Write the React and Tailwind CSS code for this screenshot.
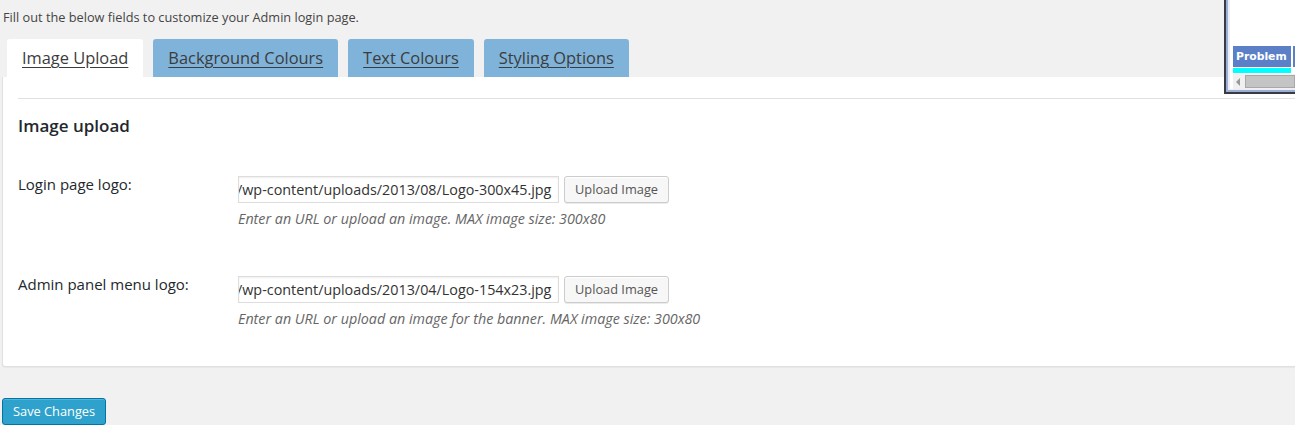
import React from 'react';

const tabs = [
  { label: 'Image Upload', active: true },
  { label: 'Background Colours' },
  { label: 'Text Colours' },
  { label: 'Styling Options' },
];

const fields = [
  {
    label: 'Login page logo:',
    value: '/wp-content/uploads/2013/08/Logo-300x45.jpg',
    help: 'Enter an URL or upload an image. MAX image size: 300x80',
  },
  {
    label: 'Admin panel menu logo:',
    value: '/wp-content/uploads/2013/04/Logo-154x23.jpg',
    help: 'Enter an URL or upload an image for the banner. MAX image size: 300x80',
  },
];

const UploadRow = ({ label, value, help }) => (
  <div className="flex pl-[15px]">
    <div className="w-[220px] pt-[1px] text-[15px] leading-[14px] text-[#23282d]">{label}</div>
    <div>
      <div className="flex items-center gap-[5px]">
        <div className="h-[27px] w-[321px] overflow-hidden whitespace-nowrap border border-[#ddd] bg-white text-[14.35px] leading-[25px] text-[#333] shadow-[inset_0_1px_2px_rgba(0,0,0,0.07)]">
          <span className="-ml-[2px] inline-block">{value}</span>
        </div>
        <button className="h-[27px] rounded-[3px] border border-[#ccc] bg-[#f7f7f7] px-[10px] text-[12.8px] text-[#555] shadow-[0_1px_0_#fff_inset,0_1px_0_rgba(0,0,0,0.08)]">
          Upload Image
        </button>
      </div>
      <p className="mt-[6px] whitespace-nowrap text-[14.3px] italic leading-[20px] text-[#666]">{help}</p>
    </div>
  </div>
);

// the stray window peeking in at the top right corner
const ProblemWindow = () => (
  <div className="absolute right-0 top-0 h-[94px] w-[71px] border-b-2 border-l-2 border-[#3a3a44]">
    <div className="h-full border-b-2 border-l-2 border-[#9aaed8] bg-[#eceef4] pl-[2px] pb-[1px]">
      <div className="flex h-full flex-col bg-white pl-[3px]">
        <div className="flex-1" />
        <div className="flex h-[21px]">
          <div className="w-[58px] overflow-hidden whitespace-nowrap bg-[#5b80c8] pl-[3px] font-['DejaVu_Sans',sans-serif] text-[10.8px] font-bold leading-[21px] text-white">
            Problem
          </div>
          <div className="ml-[2px] flex-1 bg-[#5b80c8]" />
        </div>
        <div className="mt-[1px] h-[5px] w-[58px] bg-[#00ffff]" />
        <div className="mt-[1px] flex h-[15px] items-center bg-[#f0f0f0]">
          <span className="ml-[3px] h-0 w-0 border-y-[4px] border-r-[4px] border-y-transparent border-r-[#999]" />
          <div className="ml-[5px] h-[13px] flex-1 border border-[#a8a8a8] bg-[#c4c4c4]" />
        </div>
      </div>
    </div>
  </div>
);

export default function App() {
  return (
    <div className="relative h-[425px] w-[1295px] overflow-hidden bg-[#f1f1f1] font-['Open_Sans',sans-serif] text-[#444]">
      <ProblemWindow />

      <p className="pl-[3px] pt-[8px] text-[12.75px] leading-[18px]">
        Fill out the below fields to customize your Admin login page.
      </p>

      <div className="mt-[13px] flex gap-[10px] pl-[7px]">
        {tabs.map((t) => (
          <div
            key={t.label}
            className={`h-[38px] rounded-t-[3px] px-[15px] pt-[6px] text-[16.4px] leading-[26px] text-[#3c3c3c] underline underline-offset-[3px] ${
              t.active ? 'bg-white' : 'bg-[#7fb3da]'
            }`}
          >
            {t.label}
          </div>
        ))}
      </div>

      <div className="ml-[2px] mr-[-4px] rounded-bl-[3px] border-b border-l border-[#e0e0e0] bg-white pb-[37px] pt-[21px] shadow-[0_1px_1px_rgba(0,0,0,0.04)]">
        <div className="ml-[15px] h-px bg-[#e1e1e1]" />
        <h3 className="pl-[15px] pt-[17px] text-[17px] font-semibold leading-[20px] text-[#23282d]">
          Image upload
        </h3>
        <div className="mt-[40px] flex flex-col gap-[47px]">
          {fields.map((f) => (
            <UploadRow key={f.label} {...f} />
          ))}
        </div>
      </div>

      <button className="ml-[2px] mt-[31px] h-[27px] rounded-[3px] border border-[#0074a2] bg-[#2ea2cc] px-[10px] text-[12.8px] text-white shadow-[inset_0_1px_0_rgba(120,200,230,0.5)]">
        Save Changes
      </button>
    </div>
  );
}
